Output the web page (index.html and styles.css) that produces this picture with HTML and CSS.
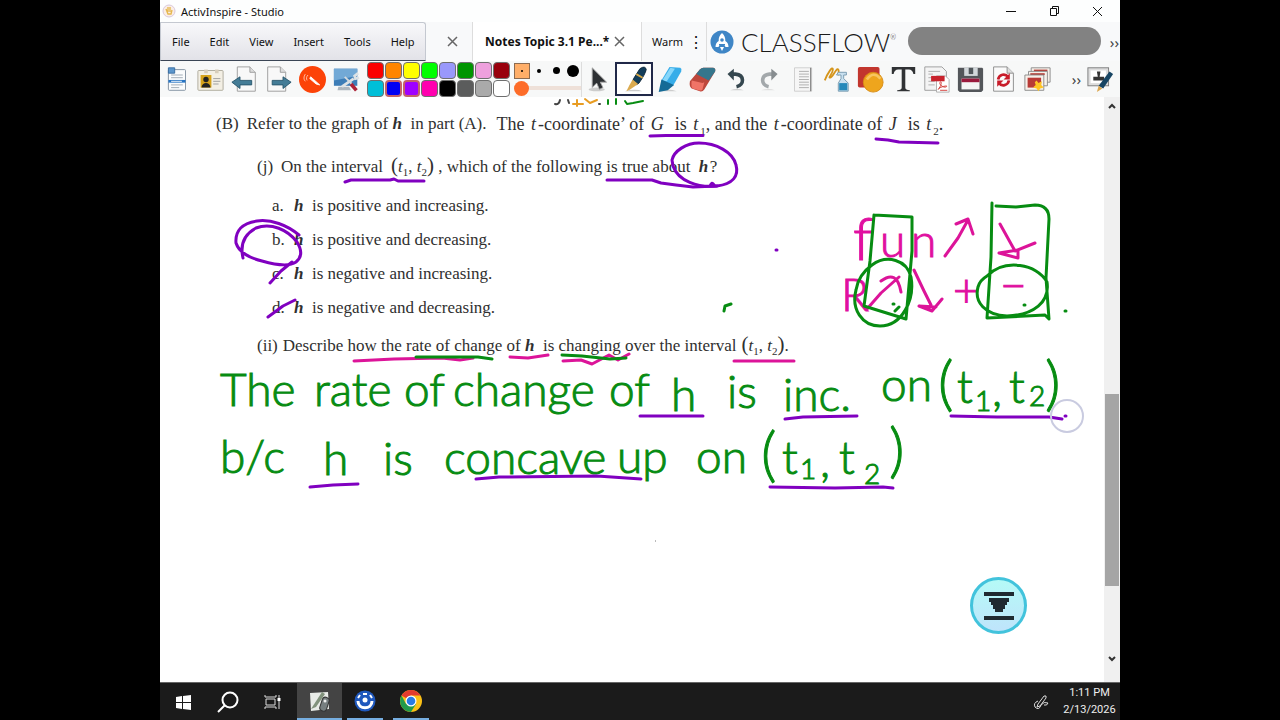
FILE: index.html
```html
<!DOCTYPE html>
<html lang="en">
<head>
<meta charset="utf-8">
<title>ActivInspire - Studio</title>
<link rel="stylesheet" href="styles.css">
</head>
<body>
<div class="desktop">
  <header class="titlebar">
    <svg class="app-logo" width="14" height="14" viewBox="0 0 14 14"><circle cx="7" cy="7" r="6" fill="#fbeee6" stroke="#d9c9dc"/><path d="M4 5l2 5h3l1-4M6 3v5M8 3v5" fill="none" stroke="#e6b84f" stroke-width="1.4"/></svg>
    <h1 class="title">ActivInspire - Studio</h1>
    <div class="window-controls">
      <button aria-label="Minimize"><svg width="12" height="12" viewBox="0 0 12 12"><path d="M1 6.5h10"/></svg></button>
      <button aria-label="Restore"><svg width="12" height="12" viewBox="0 0 12 12"><path d="M2.5 3.500h6v7h-6zM4.500 3.500v-2h6v7h-2"/></svg></button>
      <button aria-label="Close"><svg width="12" height="12" viewBox="0 0 12 12"><path d="M2 2l9 9M11 2l-9 9"/></svg></button>
    </div>
  </header>

  <div class="tabrow">
    <nav class="menu">
      <button>File</button><button>Edit</button><button>View</button><button>Insert</button><button>Tools</button><button>Help</button>
    </nav>
    <div class="tab tab-blank"><button class="tab-close" aria-label="Close tab"><svg width="11" height="11" viewBox="0 0 11 11"><path d="M1 1l9 9M10 1l-9 9"/></svg></button></div>
    <div class="tab tab-active"><button class="tab-name">Notes Topic 3.1 Pe...*</button><button class="tab-close" aria-label="Close Notes"><svg width="11" height="11" viewBox="0 0 11 11"><path d="M1 1l9 9M10 1l-9 9"/></svg></button></div>
    <div class="tab tab-next"><button class="tab-name">Warm</button><button class="tab-more" aria-label="More tabs">⋮</button></div>
    <div class="brand">
      <svg class="rocket" width="24" height="24" viewBox="0 0 24 24"><circle cx="12" cy="12" r="11.500" fill="#3f86c6"/><path d="M12 3c-2.500 2-3.500 5-3.300 8-2 1-3.200 3-3.200 6h3l1-2h5l1 2h3c0-3-1.200-5-3.200-6 .2-3-.8-6-3.300-8z" fill="#fff"/><circle cx="12" cy="10" r="1.800" fill="#3f86c6"/><path d="M9 14.500h6" stroke="#3f86c6"/><path d="M10 17h4l-2 4z" fill="#fff"/></svg>
      <span class="brand-name">CLASSFLOW<sup>®</sup></span>
    </div>
    <div class="account"></div>
    <button class="more more-top" aria-label="More">››</button>
  </div>

  <div class="toolbar">
    <div class="tools tools-left">
      <button aria-label="Main menu"><svg viewBox="0 0 30 30"><rect x="6" y="4" width="19" height="23" rx="1" fill="#fafcfd" stroke="#7d8c9c"/><path d="M6 2h7v6H6z" fill="#5b96cc" stroke="#346a9e"/><path d="M9 10h13M9 13h13M9 21h13M9 24h9" stroke="#9aa6b1"/><path d="M6 17h19" stroke="#2775c4" stroke-width="3"/><path d="M9 17h12" stroke="#fff" stroke-width="1"/></svg></button>
      <button aria-label="Profile"><svg viewBox="0 0 30 30"><rect x="1" y="5" width="28" height="22" rx="1" fill="#f3efe4" stroke="#aaa798"/><rect x="4" y="10" width="12" height="14" fill="#d5a21b"/><circle cx="10" cy="15" r="3" fill="#222"/><path d="M5 24c0-7 10-7 10 0z" fill="#222"/><path d="M18 14h8M18 17h8M18 20h6" stroke="#999"/><path d="M8 4h4v4H8zM20 4h4v4h-4z" fill="#d7cdbb"/></svg></button>
      <button aria-label="Previous page"><svg viewBox="0 0 30 30"><path d="M7 1h14l6 6v21H7z" fill="#f8f8f8" stroke="#999"/><path d="M21 1v6h6" fill="#ddd" stroke="#999"/><path d="M1 18l9-6v4h13v5H10v4z" fill="#447c96" stroke="#27566c"/></svg></button>
      <button aria-label="Next page"><svg viewBox="0 0 30 30"><path d="M3 1h14l6 6v21H3z" fill="#f8f8f8" stroke="#999"/><path d="M17 1v6h6" fill="#ddd" stroke="#999"/><path d="M29 18l-9-6v4H8v5h12v4z" fill="#447c96" stroke="#27566c"/></svg></button>
      <button aria-label="Annotate"><svg viewBox="0 0 30 30"><circle cx="15" cy="15" r="15" fill="#fc4308"/><path d="M13 12l10 9-4-1-7-6z" fill="#fff" stroke="#fff"/><path d="M10 10c-2 2-2 4-1 6M7 9c-2 3-2 6 0 8" fill="none" stroke="#ffc6b0"/></svg></button>
      <button aria-label="Desktop tools"><svg viewBox="0 0 30 30"><path d="M1 3h26v19H1z" fill="#3d7db7"/><path d="M1 3h26v8L1 16z" fill="#72a9d6"/><path d="M6 23h12l2 4H5z" fill="#aeb7bf"/><path d="M28 8l-4 3 1 3 4-1M23 14L10 23" stroke="#dde2e5" stroke-width="3" fill="none"/><path d="M13 12l8 8" stroke="#d5dade" stroke-width="2"/><path d="M20 20l6 7" stroke="#ad2439" stroke-width="4"/></svg></button>
    </div>
    <div class="palette">
      <button class="c-red" aria-label="Red"></button><button class="c-orange" aria-label="Orange"></button><button class="c-yellow" aria-label="Yellow"></button><button class="c-lime" aria-label="Lime"></button><button class="c-lilac" aria-label="Lilac"></button><button class="c-green" aria-label="Green"></button><button class="c-pink" aria-label="Pink"></button><button class="c-maroon" aria-label="Maroon"></button>
      <button class="c-cyan" aria-label="Cyan"></button><button class="c-blue" aria-label="Blue"></button><button class="c-violet" aria-label="Violet"></button><button class="c-magenta" aria-label="Magenta"></button><button class="c-black" aria-label="Black"></button><button class="c-dark" aria-label="Dark grey"></button><button class="c-grey" aria-label="Grey"></button><button class="c-white" aria-label="White"></button>
    </div>
    <div class="pen-size">
      <div class="sizes">
        <button class="size size-on" aria-label="Size 1"><i class="dot dot-2"></i></button>
        <button class="size" aria-label="Size 2"><i class="dot dot-4"></i></button>
        <button class="size" aria-label="Size 3"><i class="dot dot-7"></i></button>
        <button class="size" aria-label="Size 4"><i class="dot dot-12"></i></button>
      </div>
      <input class="width-slider" type="range" min="1" max="100" value="1" aria-label="Pen width">
    </div>
    <div class="tools tools-right">
      <button aria-label="Select"><svg viewBox="0 0 30 30"><ellipse cx="13" cy="26" rx="9" ry="2" fill="#ccc"/><path d="M8 2v22l5-5 3 7 4-2-3-6h7z" fill="#2d3033" stroke="#aaa"/></svg></button>
      <button class="selected" aria-label="Pen"><svg viewBox="0 0 30 30"><path d="M4 28q12-3 20 0z" fill="#ccc"/><path d="M21 3q6-4 7 1-1 5-8 15-3 3-6 1-2-2 0-6z" fill="#123d5a" stroke="#092337"/><path d="M17 9l7 4" stroke="#d8a947" stroke-width="2"/><path d="M13 15l6 5-9 6-4 2 3-6z" fill="#dbab50"/></svg></button>
      <button aria-label="Highlighter"><svg viewBox="0 0 30 30"><path d="M4 28q10-4 19 0z" fill="#ccc"/><path d="M15 1l12 1q2 1 1 4L19 22 6 16z" fill="#37ade9"/><path d="M16 2l5 1-9 14-5-1z" fill="#87d7fa"/><path d="M6 15l14 6-7 6-10 2z" fill="#156b96"/></svg></button>
      <button aria-label="Eraser"><svg viewBox="0 0 30 30"><path d="M1 17L12 4q2-2 4-2l11 0q3 1 2 4L17 26q-2 3-5 2L3 25q-3-2-2-8z" fill="#bd473c"/><path d="M12 4q2-2 4-2h11q3 1 2 4l-7 10-14-7z" fill="#35768c"/><path d="M3 16l12 3 2-1-2 8q-2 2-4 1l-7-2q-2-2-1-9z" fill="#f07467"/></svg></button>
      <button aria-label="Undo"><svg viewBox="0 0 30 30"><path d="M8 27q8-3 15 0z" fill="#ccc"/><path d="M10 9h4c10 1 10 12 1 14" fill="none" stroke="#35474f" stroke-width="4"/><path d="M12 3v13L5 9z" fill="#35474f"/></svg></button>
      <button aria-label="Redo"><svg viewBox="0 0 30 30"><path d="M6 27q8-3 15 0z" fill="#ddd"/><path d="M19 9h-4c-10 1-10 12-1 14" fill="none" stroke="#a3a8ab" stroke-width="4"/><path d="M17 3v13l7-7z" fill="#878d90"/></svg></button>
      <button aria-label="Ruled page"><svg viewBox="0 0 30 30"><path d="M5 2h19v26H5z" fill="#f6f6f6" stroke="#ccc"/><path d="M10 6h11M10 9h11M10 12h11M10 15h11M10 18h11M10 21h11M10 24h11" stroke="#aaa"/><path d="M23 2v26" stroke="#666"/></svg></button>
      <button aria-label="Clear ink"><svg viewBox="0 0 30 30"><path d="M2 16C5 8 11-1 11 4S5 13 8 13 15 1 17 4s-3 8 3 4" fill="none" stroke="#d5951b" stroke-width="2"/><path d="M17 7h9v3h-3v4l5 5v9H17v-9l3-5v-4h-5z" fill="#c9e0ef" stroke="#7497ae"/><path d="M18 19h9v8h-9z" fill="#2589ba"/></svg></button>
      <button aria-label="Shape"><svg viewBox="0 0 30 30"><rect x="1" y="1" width="24" height="23" rx="2" fill="#c2362e"/><circle cx="18" cy="18" r="11" fill="#eea51d" stroke="#d78b15"/><path d="M11 15q7-10 15-1" fill="none" stroke="#f8c660" stroke-width="3"/></svg></button>
      <button aria-label="Text"><svg viewBox="0 0 30 30"><path d="M2 1h26v8h-2q-1-5-5-5h-4v20q0 3 5 3v1H8v-1q5 0 5-3V4H9Q5 4 4 9H2z" fill="#303234"/></svg></button>
      <button aria-label="Export to PDF"><svg viewBox="0 0 30 30"><path d="M2 1h19l5 5v21H2z" fill="#f4f4f4" stroke="#999"/><path d="M6 6h13M6 9h5M6 13h5M6 17h7M6 21h7" stroke="#aaa"/><path d="M15 11h10l4 4v14H15z" fill="#fff" stroke="#aaa"/><rect x="9" y="11" width="15" height="6" fill="#c8222c"/><path d="M17 26c4-5 4-10 2-8s4 7 7 5-8 0-9 3M19 27h8" fill="none" stroke="#d0332f"/></svg></button>
      <button aria-label="Save"><svg viewBox="0 0 30 30"><path d="M1 2h27l1 1v24l-2 2H3l-2-2z" fill="#53565a"/><path d="M8 2h15v9H8z" fill="#d2d7da"/><path d="M13 2h5v7h-5z" fill="#50565a"/><path d="M5 14h20v12H5z" fill="#f4f4f4"/><path d="M5 14h20v4H5z" fill="#9a193c"/></svg></button>
      <button aria-label="Reset page"><svg viewBox="0 0 30 30"><path d="M4 1h15l7 7v20H4z" fill="#fafafa" stroke="#888"/><path d="M19 1v7h7" fill="#ddd" stroke="#888"/><path d="M9 15c1-6 8-7 11-3M21 16c-1 6-8 7-11 3" fill="none" stroke="#c81c2a" stroke-width="3"/><path d="M22 8v7h-7zM8 23v-7h7z" fill="#c81c2a"/></svg></button>
      <button aria-label="Media"><svg viewBox="0 0 30 30"><path d="M8 2h21v16H8z" fill="#f7f0ea" stroke="#888"/><path d="M11 5h15" stroke="#b43f38" stroke-width="2"/><path d="M5 6h21v16H5z" fill="#f7f0ea" stroke="#888"/><path d="M7 9h16" stroke="#b43f38" stroke-width="2"/><path d="M1 10h21v17H1z" fill="#f7f0ea" stroke="#888"/><path d="M4 13h15v11H4z" fill="#b93a36"/><path d="M14 16l2 3 4-2-1 4 3 3-4 1-2 3-2-3-4-1 3-3-1-3z" fill="#ffc524"/></svg></button>
    </div>
    <button class="more more-tools" aria-label="More tools">››</button>
    <div class="tools tools-end">
      <button aria-label="Stamp"><svg viewBox="0 0 30 30"><rect x="1" y="2" width="23" height="20" fill="#ddd" stroke="#777"/><rect x="4" y="5" width="17" height="14" fill="#fff"/><path d="M11 6h4l-1 6h5v4H7v-4h5z" fill="#333"/><path d="M25 6l4 3-11 16-5-3z" fill="#174563"/><path d="M13 22l4 3-6 4z" fill="#dba54c"/></svg></button>
    </div>
  </div>

  <main class="board">
    <div class="page">
      <section class="question">
        <p class="part-b"><span>(B)</span><span>Refer to the graph of <b>h</b>&nbsp; in part (A).</span><span class="wide">The <em>t</em>-coordinate’ of <em>G</em>&nbsp; is <em>t</em><sub>1</sub>, and the <em>t</em>-coordinate of <em>J</em>&nbsp; is <em>t</em><sub>2</sub>.</span></p>
        <p class="part-j"><span>(j)</span><span>On the interval</span><span><big>(</big><em>t</em><sub>1</sub>, <em>t</em><sub>2</sub><big>)</big> , which of the following is true about <b> h</b>&hairsp;?</span></p>
        <ol class="choices">
          <li><span>a.</span><span><b>h</b>&nbsp; is positive and increasing.</span></li>
          <li><span>b.</span><span><b>h</b>&nbsp; is positive and decreasing.</span></li>
          <li><span>c.</span><span><b>h</b>&nbsp; is negative and increasing.</span></li>
          <li><span>d.</span><span><b>h</b>&nbsp; is negative and decreasing.</span></li>
        </ol>
        <p class="part-ii"><span>(ii)</span><span>Describe how the rate of change of <b>h</b>&nbsp; is changing over the interval</span><span><big>(</big><em>t</em><sub>1</sub>, <em>t</em><sub>2</sub><big>)</big>.</span></p>
      </section>

      <!-- Free-hand ink canvas -->
      <svg class="ink" viewBox="160 97 944 585">
        <g class="writing green-text">
          <text x="220" y="406">The</text><text x="314" y="406">rate</text><text x="404" y="406">of</text><text x="453" y="406">change</text><text x="609" y="406">of</text><text x="671" y="411">h</text><text x="727" y="408">is</text><text x="783" y="411">inc.</text><text x="881" y="401">on</text><text class="large" x="938" y="404">(</text><text x="957" y="403">t</text><text class="small" x="975" y="411">1</text><text x="992" y="406">,</text><text x="1009" y="403">t</text><text class="small" x="1029" y="406">2</text><text class="large" x="1045" y="404">)</text>
          <text x="220" y="473">b/c</text><text x="323" y="475">h</text><text x="383" y="475">is</text><text x="444" y="474">concave</text><text x="617" y="473">up</text><text x="696" y="473">on</text><text class="large" x="761" y="475">(</text><text x="782" y="474">t</text><text class="small" x="800" y="479">1</text><text x="820" y="477">,</text><text x="839" y="474">t</text><text class="small" x="864" y="484">2</text><text class="large" x="889" y="471">)</text>
        </g>
        <g class="writing pink-text">
          <text class="large" x="853" y="260">f</text><text x="880" y="257">u</text><text x="911" y="257">n</text><text x="841" y="311">R</text><text x="953" y="306">+</text><text x="1000" y="301">−</text>
        </g>
        <g class="stroke purple">
          <path d="M650 136l16-.5h37M876 139l12 1 11 2 39 1M345 182l6-2h39l4-1 4 2h26M607 180h35l10 0 9 3 15 2 17 2 24-1M710 186q2-5 4-1"/>
          <path d="M672 160c2-9 14-17 27-17 17 0 34 9 37 22 3 11-3 19-19 21-19 2-39-5-44-20z"/>
          <path d="M243 258c-3-13 0-23 13-30 15-6 32 2 41 14 5 8 5 15-1 20-7 5-20 3-34-1-12-3-23-8-26-18-1-12 6-20 21-22 14-2 30 4 42 14M292 262l-11 9-11 12M295 300l-12 6-15 11"/>
          <path d="M640 416h63M785 419l18-2 54-1M951 416l46 1h52l13 2M310 487l23-2 25-1M476 479l23-2 98-1 44 3M770 487l65 1 48-1 10 1M776 250h1M1065 416h1"/>
        </g>
        <g class="stroke pink">
          <path d="M354 361l40-2 48-1 18 2 13-2M510 357l18 1 20-3M563 361l18-1 11 4 17-9 9 5 11-6M734 361h60M945 256l13-18 10-18M956 224l12-5 5 15M1000 224l15 27 20-8M1018 258l-19-5 19-3zM867 309l14-16 18-16M881 281q16-12 20 11M914 270l10 21 7 14M942 299l-10 12-13-5 17 1"/>
        </g>
        <g class="stroke green">
          <path d="M416 357h62l14 2M562 355l20 1 28 3 16-1"/>
          <path d="M874 215l38 2v34l-6 68-42-13 6-45 4-46M872 265c15-11 35-5 39 12 4 23-9 49-31 49-18 0-29-17-24-36 2-13 9-20 16-25z"/>
          <path d="M992 203l-1 54-4 61 58-3 4 4-3-41 3-59c0-10-5-14-14-14l-19 2-20-1M987 276c18-18 50-12 60 6 3 20-13 33-40 34-22-1-33-14-29-29 1-4 4-8 9-11z"/>
          <path d="M893 304h1M899 307l-4 4M1024 305h1M1065 311h1M724 311l1-5 6-2"/>
        </g>
        <g class="stroke clipped"><path class="orange" d="M573 104h10M577 100v6M585 99l5 4 7-3"/><path class="green" d="M608 100v4M616 99v5M625 101l2 3 6-1 10-2"/><path class="dark" d="M555 104q4 1 5-4M568 100l1 3M599 104h1"/></g>
        <circle class="pointer" cx="1067" cy="416" r="16"/>
        <path d="M655 541h1" stroke="#777"/>
      </svg>
      <button class="extend" aria-label="Extend page"><svg width="32" height="30" viewBox="0 0 32 30"><path d="M1 1h30v4H1zM1 25h30v4H1zM6 7h20v4h-2v3h-2v4h-2v3h-8v-3h-2v-4H8v-3H6z" fill="#202a31"/></svg></button>
    </div>
    <div class="scrollbar">
      <button aria-label="Scroll up"><svg width="8" height="6" viewBox="0 0 8 6"><path d="M1 5l3-3 3 3"/></svg></button>
      <div class="track"><div class="thumb"></div></div>
      <button aria-label="Scroll down"><svg width="8" height="6" viewBox="0 0 8 6"><path d="M1 1l3 3 3-3"/></svg></button>
    </div>
  </main>

  <footer class="taskbar">
    <button aria-label="Start"><svg width="16" height="16" viewBox="0 0 16 16"><path d="M1 3l6-1v6H1zM8 2l8-1v7H8zM1 9h6v6l-6-1zM8 9h8v7l-8-1z" fill="#fff"/></svg></button>
    <button aria-label="Search"><svg width="22" height="22" viewBox="0 0 22 22"><circle cx="13" cy="9" r="7.500" fill="none" stroke="#fff" stroke-width="2"/><path d="M8 14l-7 7" stroke="#fff" stroke-width="2"/></svg></button>
    <button aria-label="Task view"><svg width="18" height="16" viewBox="0 0 18 16"><path d="M2 5h9v6H2zM1 1v2h11V1M1 15v-2h11v2M15 1v14" fill="none" stroke="#ddd"/><path d="M13.500 4h3v3h-3z" fill="#fff"/></svg></button>
    <button class="open current" aria-label="ActivInspire"><svg width="24" height="22" viewBox="0 0 24 22"><path d="M2 3l18-1 1 17-18 2z" fill="#e8ebe7"/><path d="M3 19L14 2l3 2L8 17z" fill="#81927c"/><rect x="13" y="7" width="7" height="14" rx="3" transform="rotate(18 16 14)" fill="#777f80" stroke="#333"/><circle cx="17" cy="11" r="1.500" fill="#eee"/></svg></button>
    <button class="open" aria-label="ActivManager"><svg width="22" height="22" viewBox="0 0 22 22"><circle cx="11" cy="11" r="10.500" fill="#1f58bd"/><path d="M4 8l2-3M9 4h4M16 5l2 3" stroke="#fff" stroke-width="2"/><path d="M4 11c0 9 14 9 14 0" stroke="#fff" stroke-width="3" fill="none"/><circle cx="11" cy="10" r="2.500" fill="#fff"/></svg></button>
    <button class="open" aria-label="Chrome"><svg width="24" height="24" viewBox="0 0 24 24"><circle cx="12" cy="12" r="11" fill="#fbc116"/><path d="M12 12L2.500 6.500A11 11 0 0 1 21.500 6.500H12z" fill="#e33b2e"/><path d="M2.500 6.500A11 11 0 0 0 12 23l5-8-5-3-5 3z" fill="#229a4c"/><circle cx="12" cy="12" r="5.500" fill="#fff"/><circle cx="12" cy="12" r="4.300" fill="#287be5"/></svg></button>
    <svg class="tray-pen" width="16" height="16" viewBox="0 0 16 16"><path d="M5 10L11 2q3-1 2 2L7 12l-3 1zM5 7q-5 2-3 6 4 4 6-2 3-4 7-2-1 3-4 2" fill="none" stroke="#ddd"/></svg>
    <div class="clock"><time>1:11 PM</time><time>2/13/2026</time></div>
  </footer>
</div>
</body>
</html>
```

FILE: styles.css
```css
* { box-sizing: border-box; }
body { margin: 0; background: #000; font-family: "Noto Sans", "Open Sans", sans-serif; color: #111; }
button { border: 0; padding: 0; margin: 0; background: none; font: inherit; color: inherit; display: flex; align-items: center; justify-content: center; }
.desktop { width: 75%; min-height: 100vh; margin: 0 auto; display: flex; flex-direction: column; background: #fff; }

.titlebar { height: 22px; display: flex; align-items: center; padding: 0 2px; gap: 5px; background: #fdfefe; }
.title { margin: 0; font-size: 11px; font-weight: 400; flex: 1; }
.window-controls { display: flex; }
.window-controls button { width: 43px; height: 18px; }
.window-controls path { fill: none; stroke: #111; }

.tabrow { height: 39px; display: flex; align-items: stretch; background: #f8f9fa; font-size: 12px; }
.menu { width: 266px; height: 39px; display: flex; align-items: center; gap: 20px; padding-left: 11px; background: linear-gradient(#f8f8fa, #e2e2e8); border: 1px solid #c4c8d0; border-bottom-color: #3a4555; border-radius: 0 3px 0 0; margin-right: auto; font-size: 11px; }
.tab { display: flex; align-items: center; border-right: 1px solid #ddd; }
.tab-close path { fill: none; stroke: #666; stroke-width: 1.500; }
.tab-blank { width: 47px; padding-left: 21px; }
.tab-active { width: 169px; padding-left: 12px; gap: 5px; background: #fff; font-weight: 700; }
.tab-next { width: 65px; padding-left: 10px; gap: 4px; }
.tab-next .tab-name { font-size: 11px; width: 34px; justify-content: flex-start; }
.tab-more { width: 12px; font-size: 16px; }
.brand { display: flex; align-items: center; padding-left: 3px; width: 201px; gap: 7px; }
.brand-name { font: 300 26px "Lato", sans-serif; white-space: nowrap; color: #1b1b1b; }
.brand-name sup { font-size: 7px; vertical-align: 12px; }
.account { width: 193px; height: 28px; margin: 5px 0 0; border-radius: 14px; background: #828282; }
.more { width: 22px; font-size: 15px; color: #444; }
.more-top { width: 19px; padding-left: 8px; }

.toolbar { height: 36px; display: flex; align-items: center; background: #f7f8f8; }
.tools { display: flex; height: 34px; }
.tools button { flex: 1; }
.tools svg { width: 27px; height: 27px; }
.tools-left { width: 203px; }
.tools-right { flex: 1; }
.tools-end { width: 34px; margin-right: 3px; }
.more-tools { width: 29px; padding-left: 16px; }
.tools .selected { border: 2px solid #202848; background: #fff; }
.palette { display: grid; grid-template-columns: repeat(8, 18px); gap: 1px 0; margin-left: 4px; }
.palette button { width: 17px; height: 17px; border: 1px solid #6f6f6f; border-radius: 4px; }
.c-red { background: #fb0000; } .c-orange { background: #ff8500; } .c-yellow { background: #ff0; } .c-lime { background: #0f0; }
.c-lilac { background: #9998fb; } .c-green { background: #009500; } .c-pink { background: #eea0dd; } .c-maroon { background: #99000d; }
.c-cyan { background: #00bfd8; } .c-blue { background: #0000f4; } .c-violet { background: #9f00ff; } .c-magenta { background: #ff00af; }
.c-black { background: #000; } .c-dark { background: #5b5c5c; } .c-grey { background: #aaa; } .c-white { background: #fff; }
.palette .c-blue, .palette .c-violet { border: 2px solid #c56269; }
.pen-size { width: 71px; padding-left: 3px; border-right: 1px solid #ddd; }
.sizes { display: flex; gap: 1px; height: 18px; align-items: center; }
.size { width: 16px; height: 16px; }
.size-on { background: #ffae68; border: 1px solid #8c6b50; }
.dot { display: block; border-radius: 50%; background: #000; }
.dot-2 { width: 2px; height: 2px; } .dot-4 { width: 4px; height: 4px; } .dot-7 { width: 7px; height: 7px; } .dot-12 { width: 12px; height: 12px; }
.width-slider { display: block; appearance: none; width: 100%; height: 17px; margin: 0; background: linear-gradient(#eee0d8, #eee0d8) center / 100% 4px no-repeat; }
.width-slider::-webkit-slider-thumb { appearance: none; width: 15px; height: 15px; border-radius: 50%; background: #fd6c29; }

.board { flex: 1; display: flex; }
.page { flex: 1; position: relative; overflow: hidden; }
.question { padding: 16px 0 0 56px; font: 17px/22px "Liberation Serif", serif; color: #303030; }
.question p { margin: 0; display: flex; white-space: pre; }
.question b, .question em { font-style: italic; }
.question sub { font-size: 11px; line-height: 0; }
.question big { font-size: 21px; line-height: 0; }
.question .part-b { gap: 8px; }
.question .wide { font-size: 18px; padding-left: 2px; }
.question .wide em { padding: 0 2px; }
.question .part-j { margin: 21px 0 0 41px; gap: 8px; }
.question .part-ii { margin: 16px 0 0 41px; gap: 5px; }
.choices { list-style: none; margin: 17px 0 0 56px; padding: 0; display: grid; gap: 12px; }
.choices li { display: flex; white-space: pre; }
.choices li span:first-child { width: 22px; }
.ink { position: absolute; left: 0; top: 0; width: 944px; height: 585px; pointer-events: none; }
.writing { font: 300 46px "Lato", sans-serif; stroke-width: 1px; }
.writing .small { font-size: 28px; }
.writing .large { font-size: 60px; }
.green-text { fill: #078c12; stroke: #078c12; }
.pink-text { fill: #e010a0; stroke: #e010a0; }
.stroke { fill: none; stroke-width: 3px; stroke-linecap: round; stroke-linejoin: round; }
.purple { stroke: #8000c0; }
.pink { stroke: #dc1499; }
.green { stroke: #078c12; }
.orange { stroke: #e89c22; }
.dark { stroke: #444; }
.clipped { stroke-width: 2px; }
.pointer { fill: none; stroke: #c9cbe0; stroke-width: 2px; }
.extend { position: absolute; right: 77px; bottom: 48px; width: 57px; height: 57px; border: 3px solid #42c3dc; border-radius: 50%; background: linear-gradient(#b5faf7, #bfe4fb); }
.extend svg { flex: none; }
.scrollbar { width: 16px; display: flex; flex-direction: column; background: #f0f0f0; padding-bottom: 15px; }
.scrollbar button { height: 17px; }
.scrollbar path { fill: none; stroke: #333; stroke-width: 2; }
.track { flex: 1; display: flex; flex-direction: column; padding: 280px 1px 0; }
.thumb { height: 192px; background: #a5a5a5; }

.taskbar { height: 38px; display: flex; align-items: stretch; background: #1b1b1b; border-top: 1px solid #666; color: #eee; }
.taskbar button { width: 45px; }
.taskbar .open { width: 36px; margin: 0 5px; border-bottom: 2px solid #76aee0; }
.taskbar .current { width: 45px; margin: 0 0 0 2px; background: #444; }
.tray-pen { margin: 11px 10px 0 auto; }
.clock { width: 61px; display: flex; flex-direction: column; align-items: center; justify-content: center; font: 11px/17px "Roboto", sans-serif; padding-bottom: 2px; }
```
